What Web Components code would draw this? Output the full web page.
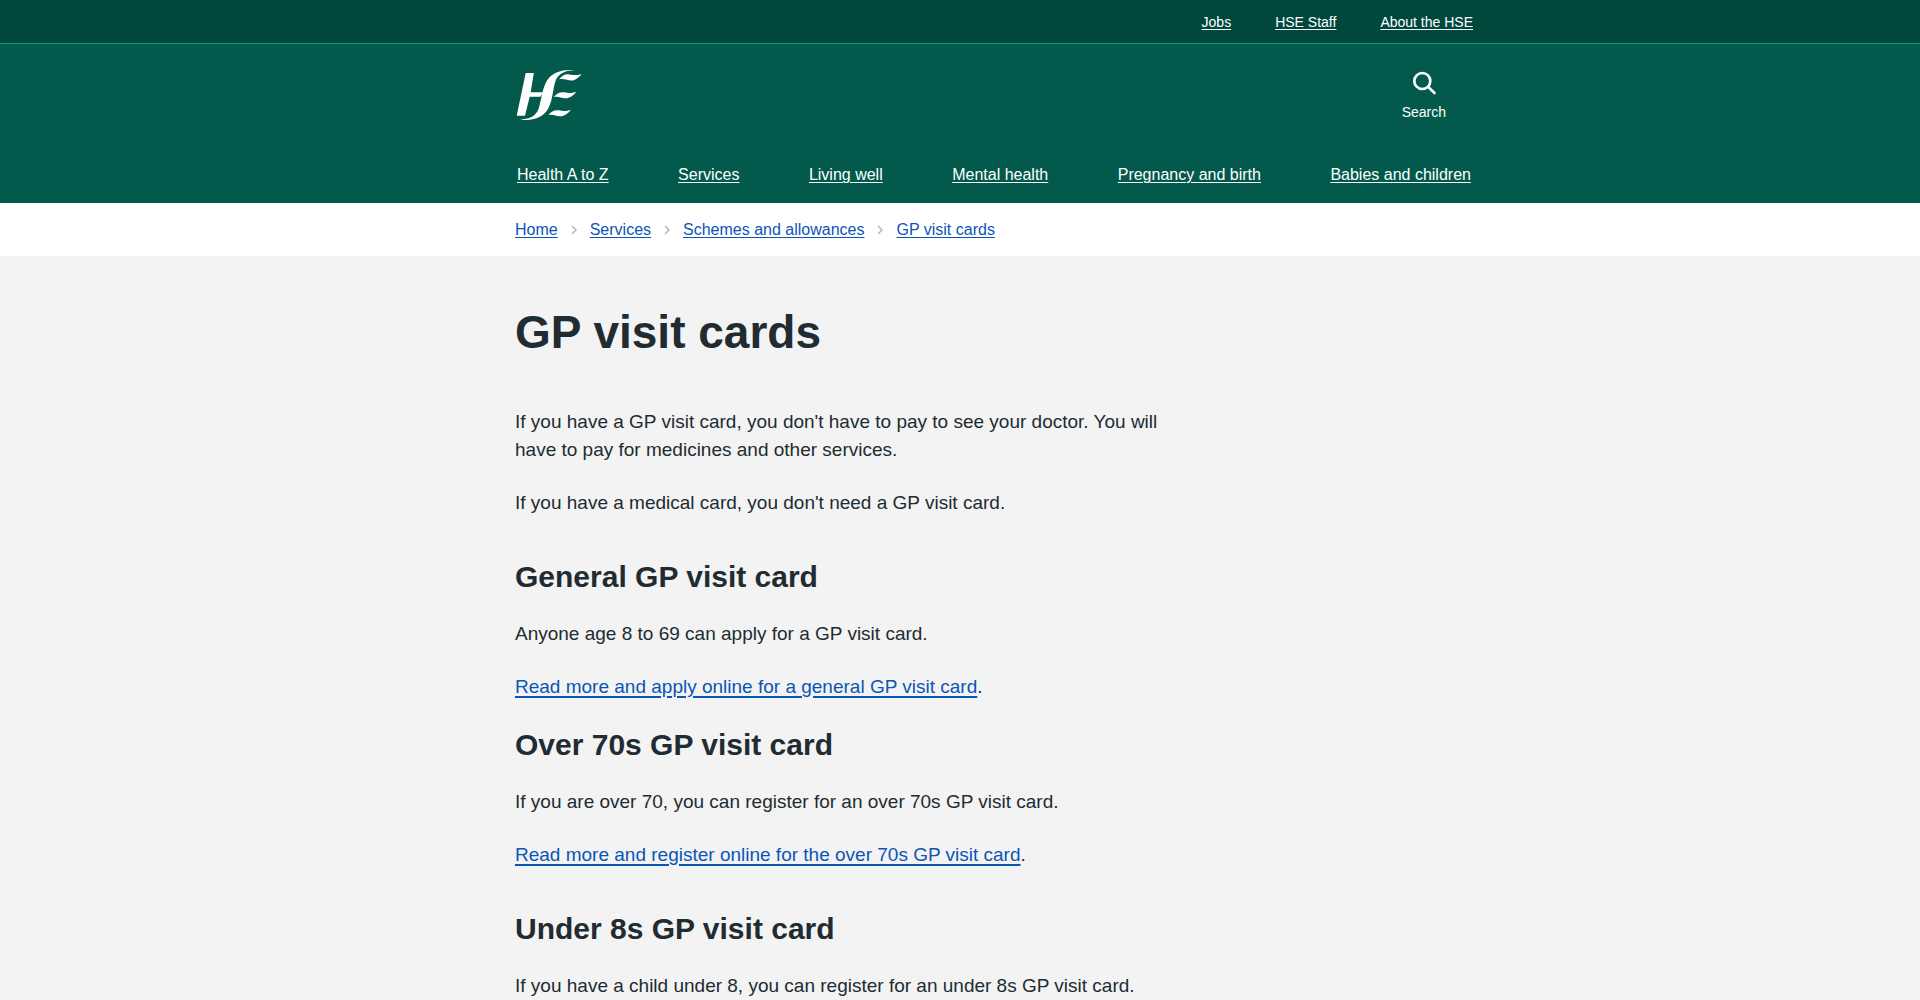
<!DOCTYPE html>
<html lang="en">
<head>
<meta charset="utf-8">
<meta name="viewport" content="width=device-width, initial-scale=1">
<title>GP visit cards - HSE.ie</title>
<style>
  body { margin: 0; min-height: 100vh; background: #f3f3f3; color: #212b32; font: 19px/28px "Liberation Sans", Arial, sans-serif; }
</style>
</head>
<body>
<hse-header>
  <hse-link slot="top" href="#jobs">Jobs</hse-link>
  <hse-link slot="top" href="#staff">HSE Staff</hse-link>
  <hse-link slot="top" href="#about">About the HSE</hse-link>
  <hse-link slot="nav" href="#health">Health A to Z</hse-link>
  <hse-link slot="nav" href="#services">Services</hse-link>
  <hse-link slot="nav" href="#living">Living well</hse-link>
  <hse-link slot="nav" href="#mental">Mental health</hse-link>
  <hse-link slot="nav" href="#pregnancy">Pregnancy and birth</hse-link>
  <hse-link slot="nav" href="#babies">Babies and children</hse-link>
</hse-header>
<hse-breadcrumb>
  <hse-crumb><hse-link href="#home">Home</hse-link></hse-crumb>
  <hse-crumb><hse-link href="#services">Services</hse-link></hse-crumb>
  <hse-crumb><hse-link href="#schemes">Schemes and allowances</hse-link></hse-crumb>
  <hse-crumb last><hse-link href="#gp">GP visit cards</hse-link></hse-crumb>
</hse-breadcrumb>
<hse-article heading="GP visit cards">
  <hse-text>If you have a GP visit card, you don't have to pay to see your doctor. You will have to pay for medicines and other services.</hse-text>
  <hse-text>If you have a medical card, you don't need a GP visit card.</hse-text>
  <hse-section heading="General GP visit card">
    <hse-text>Anyone age 8 to 69 can apply for a GP visit card.</hse-text>
    <hse-text><hse-link thick href="#general">Read more and apply online for a general GP visit card</hse-link>.</hse-text>
  </hse-section>
  <hse-section near heading="Over 70s GP visit card">
    <hse-text>If you are over 70, you can register for an over 70s GP visit card.</hse-text>
    <hse-text><hse-link thick href="#over70">Read more and register online for the over 70s GP visit card</hse-link>.</hse-text>
  </hse-section>
  <hse-section heading="Under 8s GP visit card">
    <hse-text>If you have a child under 8, you can register for an under 8s GP visit card.</hse-text>
  </hse-section>
</hse-article>

<template id="t-wrap">
  <style>
    :host { display: block; box-sizing: border-box; max-width: 1026px; margin: 0 auto; padding-left: 68px; }
    @media (max-width: 1026px) { :host { padding: 0 16px; } }
  </style>
  <slot></slot>
</template>

<template id="t-link"><style>
    :host { display: inline; }
    a { color: var(--link, #0b55b7); text-decoration: underline; text-decoration-thickness: 1px; text-underline-offset: 2px; }
    :host([thick]) a { text-decoration-thickness: 2px; text-underline-offset: 3px; }
  </style><a><slot></slot></a></template>

<template id="t-header">
  <style>
    :host { display: block; background: #02594c; color: #fff; --link: #fff; }
    .top { background: #00473c; border-bottom: 1px solid #0c9d83; }
    .links { display: flex; flex-wrap: wrap; justify-content: flex-end; gap: 0 44px; padding: 13px 0 11px; font-size: 14px; line-height: 19px; }
    .bar { display: flex; justify-content: space-between; align-items: flex-start; padding: 24px 27px 0 0; }
    .logo { display: block; }
    svg { display: block; }
    button { display: flex; flex-direction: column; align-items: center; gap: 6px; padding: 2px 0 0; border: 0; background: none; color: inherit; font: inherit; font-size: 14px; line-height: 16px; cursor: pointer; }
    nav { display: flex; flex-wrap: wrap; justify-content: space-between; gap: 0 24px; padding: 41px 2px 16px; font-size: 16px; line-height: 24px; }
  </style>
  <header>
    <div class="top"><hse-wrap><div class="links"><slot name="top"></slot></div></hse-wrap></div>
    <hse-wrap>
      <div class="bar">
        <a class="logo" href="#home" aria-label="HSE home"><svg width="70" height="54" viewBox="0 0 70 54" fill="#fff"><path d="M10.700 5H18.800L15.700 24.300H28L25.500 28.700H14.700L10 47.800H1.700Z"/><path d="M5 51.500C14 51.500 21 48 23.500 41C27 30 27 21 32 12.500C37.500 4 48 1 59.500 2.200C49 2.600 43 6 40.500 13C37.500 22 38 32 33 41C28 50 16 53.500 5 51.500Z"/><path d="M44 11.300C47 7.500 50.500 5.700 54.500 6.400C58.500 7.200 62 7.500 66.500 5.900C63.500 10 59.500 12.800 55.500 12.500C51 12 49 10.300 44 11.300Z"/><path d="M38.700 29C41.700 25.200 45.200 23.600 49.200 24.300C53.200 25.200 56.700 25.500 61.200 23.800C58.200 28 54.200 30.600 50.200 30.300C45.700 29.900 43.700 28.200 38.700 29Z"/><path d="M33.300 47C36.300 43.200 39.800 41.600 43.800 42.300C47.800 43.200 51.300 43.500 55.800 41.800C52.800 46 48.800 48.600 44.800 48.300C40.300 47.900 38.300 46.200 33.300 47Z"/></svg></a>
        <button type="button"><svg width="28" height="28" viewBox="0 0 28 28" fill="none" stroke="#fff" stroke-width="2.700" stroke-linecap="round"><circle cx="12.300" cy="11" r="8"/><path d="M18.300 17L24.500 23"/></svg>Search</button>
      </div>
      <nav aria-label="Main"><slot name="nav"></slot></nav>
    </hse-wrap>
  </header>
</template>

<template id="t-breadcrumb">
  <style>
    :host { display: block; background: #fff; }
    nav { display: flex; flex-wrap: wrap; padding: 15px 0 14px; font-size: 16px; line-height: 24px; }
  </style>
  <hse-wrap><nav aria-label="Breadcrumb"><slot></slot></nav></hse-wrap>
</template>

<template id="t-crumb">
  <style>
    :host { display: flex; align-items: center; }
    svg { margin: 0 13px; }
    :host([last]) svg { display: none; }
  </style>
  <slot></slot><svg width="6" height="10" viewBox="0 0 6 10" fill="none" stroke="#aeb7bd" stroke-width="1.500" aria-hidden="true"><path d="M1 1L5 5L1 9"/></svg>
</template>

<template id="t-article">
  <style>
    :host { display: block; }
    main { padding: 48px 0; max-width: 660px; }
    h1 { margin: 0 0 48px; font-size: 46px; line-height: 56px; }
  </style>
  <hse-wrap><main><h1></h1><slot></slot></main></hse-wrap>
</template>

<template id="t-section">
  <style>
    :host { display: block; margin-top: 40px; }
    :host([near]) { margin-top: 24px; }
    h2 { margin: 0 0 23px; font-size: 30px; line-height: 40px; }
  </style>
  <section><h2></h2><slot></slot></section>
</template>

<template id="t-text"><style>
    :host { display: block; }
    :host(:not(:last-child)) { margin-bottom: 25px; }
    p { margin: 0; }
  </style><p><slot></slot></p></template>

<script>
  class HseElement extends HTMLElement {
    connectedCallback() {
      if (this.shadowRoot) return;
      const name = this.localName.replace('hse-', 't-');
      const root = this.attachShadow({ mode: 'open' });
      root.append(document.getElementById(name).content.cloneNode(true));
      this.setup(root);
    }
    setup() {}
  }
  class HseWrap extends HseElement {}
  class HseHeader extends HseElement {}
  class HseBreadcrumb extends HseElement {}
  class HseCrumb extends HseElement {}
  class HseText extends HseElement {}
  class HseLink extends HseElement {
    setup(root) { root.querySelector('a').href = this.getAttribute('href'); }
  }
  class HseArticle extends HseElement {
    setup(root) { root.querySelector('h1').textContent = this.getAttribute('heading'); }
  }
  class HseSection extends HseElement {
    setup(root) { root.querySelector('h2').textContent = this.getAttribute('heading'); }
  }
  customElements.define('hse-wrap', HseWrap);
  customElements.define('hse-link', HseLink);
  customElements.define('hse-header', HseHeader);
  customElements.define('hse-crumb', HseCrumb);
  customElements.define('hse-breadcrumb', HseBreadcrumb);
  customElements.define('hse-text', HseText);
  customElements.define('hse-section', HseSection);
  customElements.define('hse-article', HseArticle);
</script>
</body>
</html>
